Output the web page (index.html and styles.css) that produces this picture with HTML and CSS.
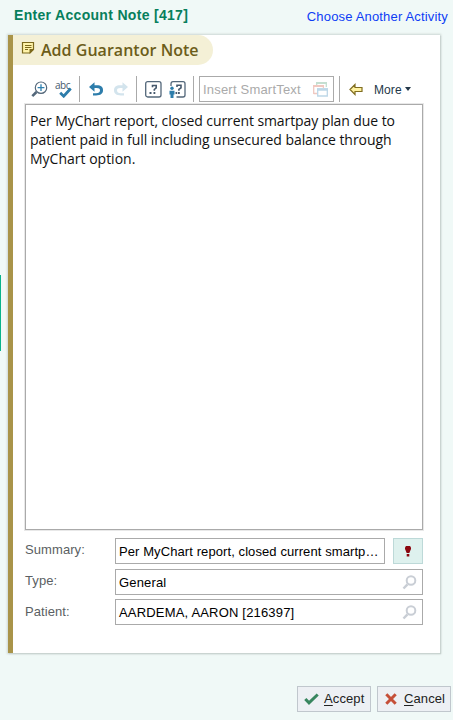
FILE: index.html
```html
<!DOCTYPE html>
<html lang="en">
<head>
<meta charset="utf-8">
<title>Enter Account Note</title>
<link rel="stylesheet" href="styles.css">
</head>
<body>
<div class="edge"></div>
<header class="top"><h1><span>Enter Account Note [417]</span></h1><a class="choose">Choose Another Activity</a></header>
<main class="panel">
  <h2 class="tab">
    <svg width="14" height="14" viewBox="0 0 14 14"><path d="M1.500 1.500h11v7l-3.500 3.500h-7.500z" fill="#fff3a8" stroke="#7d6a1c" stroke-width="1.200"/><path d="M13 8H8.500v5z" fill="#7d6a1c"/><path d="M4 4.500h6.500M4 6.500h6.500M4 8.500h3" stroke="#7d6a1c"/></svg>
    <span class="tab-text">Add Guarantor Note</span>
  </h2>
  <div class="toolbar">
    <svg class="zoom" width="17" height="17" viewBox="0 0 17 17" fill="none"><circle cx="10" cy="6.700" r="5.700" stroke="#53677a" stroke-width="1.200"/><path d="M10 3.300v6.800M6.600 6.700h6.800" stroke="#2d80b0" stroke-width="1.300"/><path d="M5.500 11L1.300 15.200" stroke="#53677a" stroke-width="2.600"/></svg>
    <span class="spell"><span>abc</span><svg width="13" height="11" viewBox="0 0 13 11"><path d="M1.200 5.800l3.500 3.400L11.700 1.500" fill="none" stroke="#2d7dab" stroke-width="2.800"/></svg></span>
    <i class="sep s1"></i>
    <svg class="undo" width="15" height="15" viewBox="0 0 15 15"><path d="M0 5L5.500.300v3H8c4 0 6 1.800 6 5 0 3.300-2.300 5.200-7 5.200H4v-2.300h3c2.800 0 4-1 4-2.900 0-1.700-1.200-2.400-3.300-2.400H5.500v3.800z" fill="#2d7dab"/></svg>
    <svg class="redo" width="15" height="15" viewBox="0 0 15 15"><path transform="translate(15 0) scale(-1 1)" d="M0 5L5.500.300v3H8c4 0 6 1.800 6 5 0 3.300-2.300 5.200-7 5.200H4v-2.300h3c2.800 0 4-1 4-2.900 0-1.700-1.200-2.400-3.300-2.400H5.500v3.800z" fill="#d3e4ed"/></svg>
    <i class="sep s2"></i>
    <svg class="wild" width="17" height="17" viewBox="0 0 17 17" fill="none"><rect x=".700" y=".700" width="15.300" height="15.300" rx="2" stroke="#53677a" stroke-width="1.300"/><path d="M7.500 6.200V4.500h3.700v2.300L9.300 8.500v1.200" stroke="#46596d" stroke-width="1.600"/><path d="M4.500 11h2v2h-2zM8.500 11h1.800v2H8.500z" fill="#46596d"/></svg>
    <svg class="wild2" width="17" height="17" viewBox="0 0 17 17" fill="none"><path d="M2 5V3q0-2.300 2-2.300h10q2 0 2 2v11.300q0 2-2 2H7.500" stroke="#53677a" stroke-width="1.300"/><path d="M8 6V4.300h4v2.500L9.900 8.500v1.200" stroke="#46596d" stroke-width="1.600"/><path d="M6.500 11h1.700v2H6.500zM9 11h1.800v2H9z" fill="#46596d"/><circle cx="3" cy="7.300" r="1.700" fill="#2d7dab"/><path d="M.500 9.800h5v3.700h-1V17h-3v-3.500h-1z" fill="#2d7dab"/></svg>
    <i class="sep s3"></i>
    <div class="smart"><span>Insert SmartText</span><svg width="15" height="15" viewBox="0 0 15 15" fill="none"><path d="M3.700 3V.800h9.600V5" stroke="#c5dfd1" stroke-width="1.300"/><path d="M3 1h11" stroke="#c5dfd1" stroke-width="2"/><path d="M.700 12V4h9.700v2M.700 11.500H4" stroke="#f0c8c0" stroke-width="1.300"/><path d="M0 4h11" stroke="#f0c8c0" stroke-width="2"/><path d="M4.700 7h9.600v7H4.700z" stroke="#bdd7e7" stroke-width="1.300"/><path d="M4 7.500h11" stroke="#bdd7e7" stroke-width="2.500"/></svg></div>
    <i class="sep s4"></i>
    <svg class="arrow" width="14" height="13" viewBox="0 0 14 13"><path d="M1 6.500L6 1.500v3h7v4H6v3z" fill="#fff2a0" stroke="#806d20" stroke-width="1.200"/></svg>
    <span class="more">More</span><i class="caret"></i>
  </div>
  <div class="editor"><span class="l1">Per MyChart report, closed current smartpay plan due to</span><br><span class="l2">patient paid in full including unsecured balance through</span><br><span class="l3">MyChart option.</span></div>
  <div class="row"><label>Summary:</label><div class="field"><span class="sum">Per MyChart report, closed current smartp…</span></div>
    <button class="bang"><svg width="6" height="11" viewBox="0 0 6 11"><path d="M1 0h4l1 1.500V3L4.300 7H1.700L0 3V1.500z" fill="#8b0710"/><path d="M1.700 8h2.600v2.500H1.700z" fill="#8b0710"/></svg></button></div>
  <div class="row type"><label>Type:</label><div class="field"><span class="kind">General</span><svg class="look" width="15" height="15" viewBox="0 0 15 15" fill="none" stroke="#c9ced5"><circle cx="9" cy="5.500" r="4.300" stroke-width="2"/><path d="M5.500 9.300L1.500 13.500" stroke-width="2.500"/></svg></div></div>
  <div class="row patient"><label>Patient:</label><div class="field"><span class="name">AARDEMA, AARON [216397]</span><svg class="look" width="15" height="15" viewBox="0 0 15 15" fill="none" stroke="#c9ced5"><circle cx="9" cy="5.500" r="4.300" stroke-width="2"/><path d="M5.500 9.300L1.500 13.500" stroke-width="2.500"/></svg></div></div>
</main>
<footer class="actions">
  <button class="act"><svg width="15" height="12" viewBox="0 0 15 12"><path d="M1.300 6l3.700 3.800L13.700 1.500" fill="none" stroke="#38865f" stroke-width="3"/></svg><span><u>A</u>ccept</span></button>
  <button class="act cancel"><svg width="12" height="12" viewBox="0 0 12 12"><path d="M1.300 1.300l9.400 9.400M10.700 1.300l-9.400 9.400" stroke="#c54f38" stroke-width="3"/></svg><span><u>C</u>ancel</span></button>
</footer>
</body>
</html>
```
FILE: styles.css
```css
* { box-sizing: border-box; }
body { margin: 0; width: 453px; height: 720px; overflow: hidden; background: #f0f9f7; font: 13px/16px "Liberation Sans", Arial, sans-serif; color: #000; display: flex; flex-direction: column; }
svg { display: block; flex: none; }
button { font: inherit; padding: 0; }
.edge { position: absolute; left: 0; top: 275px; width: 1px; height: 76px; background: #08b48c; }
.top { height: 35px; flex: none; display: flex; justify-content: space-between; padding: 7px 5px 0 14px; white-space: nowrap; }
h1 { margin: 0; font-size: 14px; line-height: 16px; color: #077f5c; letter-spacing: .31px; }
.choose { color: #0d3df5; padding-top: 2px; letter-spacing: .17px; }
.panel { width: 432px; height: 618px; flex: none; margin-left: 8px; background: #fff; border-left: 5px solid #a99449; box-shadow: 0 0 2px 1px #ccd6d3, 1px 1px 1px #c5cfcc; padding: 0 17px 0 12px; }
.tab { margin: 0 0 0 -12px; width: 200px; height: 30px; background: #f4f0d6; border-radius: 0 15px 15px 0; padding-left: 8px; display: flex; color: #6c5d1a; font: 600 16px/30px "Open Sans", "Noto Sans", sans-serif; white-space: nowrap; }
.tab svg { margin-top: 6px; }
.tab-text { margin-left: 6px; letter-spacing: .03px; }
.toolbar { height: 26px; margin-top: 11px; display: flex; align-items: center; white-space: nowrap; }
.zoom { margin-left: 6px; }
.spell { width: 17px; height: 18px; margin: -1px 0 0 7px; position: relative; font: 10px/10px "Open Sans", sans-serif; letter-spacing: -.5px; color: #46596d; }
.spell svg { position: absolute; left: 4px; top: 7px; }
.sep { width: 1px; height: 26px; background: #aaa; flex: none; }
.s1 { margin-left: 7px; }
.undo { margin-left: 9px; }
.redo { margin-left: 9px; }
.s2 { margin-left: 8px; }
.wild { margin-left: 8px; }
.wild2 { margin-left: 7px; }
.s3 { margin-left: 7px; }
.smart { margin-left: 5px; width: 135px; height: 26px; border: 1px solid #aaa; display: flex; align-items: center; justify-content: space-between; padding: 0 5px 0 3px; color: #aaa; letter-spacing: .2px; }
.smart span { padding-top: 1px; }
.s4 { margin-left: 5px; }
.arrow { margin-left: 9px; }
.more { margin-left: 11px; color: #243849; font-size: 12px; letter-spacing: .1px; padding-top: 1px; }
.caret { margin-left: 3px; border: 3.5px solid transparent; border-top: 4px solid #243849; border-bottom: 0; }
.editor { margin-top: 2px; width: 398px; height: 426px; border: 1px solid #aaa; box-shadow: 0 0 0 1px #e8e8e8; padding: 6px 0 0 4px; font: 14px/19px "Open Sans", sans-serif; white-space: nowrap; color: #111; }
.l1 { letter-spacing: -.09px; }
.l2 { letter-spacing: -.05px; }
.row { margin-top: 8px; height: 26px; display: flex; }
.row label { width: 90px; flex: none; color: #5b5f63; padding-top: 4px; letter-spacing: .08px; }
.type { margin-top: 5px; }
.patient { margin-top: 4px; }
.patient label { padding-top: 5px; }
.field { flex: 1; min-width: 0; border: 1px solid #aaa; padding: 0 4px 0 3px; display: flex; align-items: center; justify-content: space-between; white-space: nowrap; }
.field span { padding-top: 2px; }
.sum { letter-spacing: .09px; }
.kind { letter-spacing: .15px; }
.name { letter-spacing: .18px; }
.look { margin-right: 1px; }
.bang { width: 30px; height: 26px; margin-left: 8px; flex: none; border: 1px solid #bdd9d8; background: #def1ee; display: flex; align-items: center; justify-content: center; }
.actions { margin-top: 33px; display: flex; justify-content: flex-end; gap: 6px; padding-right: 2px; }
.act { width: 74px; height: 26px; background: #edf0f4; border: 1px solid #c0c7cd; display: flex; align-items: center; padding-left: 6px; color: #222; }
.act span { margin-left: 5px; letter-spacing: .1px; }
.act u { text-underline-offset: 2px; }
.cancel { padding-left: 7px; }
.cancel span { margin-left: 7px; }
```
